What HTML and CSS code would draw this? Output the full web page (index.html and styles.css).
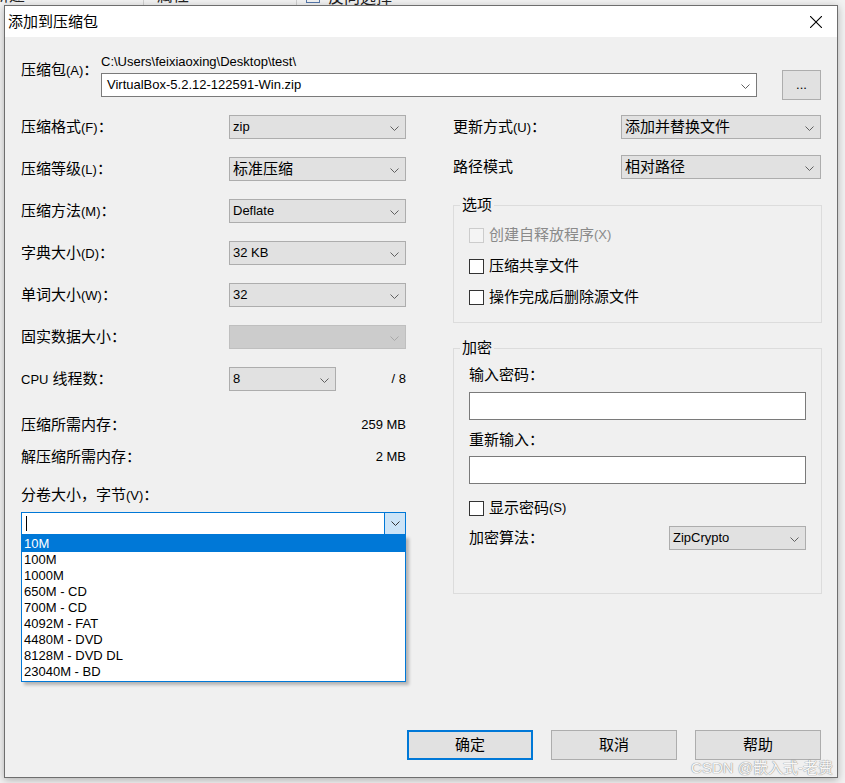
FILE: index.html
```html
<html>
<head>
<meta charset="utf-8">
<meta name="viewport" content="width=device-width, initial-scale=1">
<link rel="stylesheet" href="styles.css">
</head>
<body>
<div class="behind">
  <span class="b1">新建</span>
  <span class="sep s1"></span>
  <span class="b2">属性</span>
  <span class="sep s2"></span>
  <span class="b3"><i class="bbox"></i>反向选择</span>
</div>

<div class="dialog">
  <div class="titlebar">
    <span class="title">添加到压缩包</span>
    <svg class="close" width="12" height="12" viewBox="0 0 12 12"><path d="M0 0L12 12M12 0L0 12" stroke="#000" stroke-width="1.1"/></svg>
  </div>

  <div class="content">
    <div class="archive">
      <span class="archive-label">压缩包<span class="en">(A)</span>：</span>
      <div class="archive-field">
        <div class="path en">C:\Users\feixiaoxing\Desktop\test\</div>
        <div class="combo edit">
          <span class="en">VirtualBox-5.2.12-122591-Win.zip</span>
          <svg class="chev" width="9" height="5" viewBox="0 0 9 5"><path d="M.5 .5l4 4 4-4" fill="none" stroke="#606060"/></svg>
        </div>
      </div>
      <button class="btn browse"><span class="en">...</span></button>
    </div>

    <div class="columns">
      <div class="col-left">
        <div class="row">
          <span class="lbl">压缩格式<span class="en">(F)</span>：</span>
          <div class="combo"><span class="en">zip</span><svg class="chev" width="9" height="5" viewBox="0 0 9 5"><path d="M.5 .5l4 4 4-4" fill="none" stroke="#606060"/></svg></div>
        </div>
        <div class="row">
          <span class="lbl">压缩等级<span class="en">(L)</span>：</span>
          <div class="combo"><span>标准压缩</span><svg class="chev" width="9" height="5" viewBox="0 0 9 5"><path d="M.5 .5l4 4 4-4" fill="none" stroke="#606060"/></svg></div>
        </div>
        <div class="row">
          <span class="lbl">压缩方法<span class="en">(M)</span>：</span>
          <div class="combo"><span class="en">Deflate</span><svg class="chev" width="9" height="5" viewBox="0 0 9 5"><path d="M.5 .5l4 4 4-4" fill="none" stroke="#606060"/></svg></div>
        </div>
        <div class="row">
          <span class="lbl">字典大小<span class="en">(D)</span>：</span>
          <div class="combo"><span class="en">32 KB</span><svg class="chev" width="9" height="5" viewBox="0 0 9 5"><path d="M.5 .5l4 4 4-4" fill="none" stroke="#606060"/></svg></div>
        </div>
        <div class="row">
          <span class="lbl">单词大小<span class="en">(W)</span>：</span>
          <div class="combo"><span class="en">32</span><svg class="chev" width="9" height="5" viewBox="0 0 9 5"><path d="M.5 .5l4 4 4-4" fill="none" stroke="#606060"/></svg></div>
        </div>
        <div class="row">
          <span class="lbl">固实数据大小：</span>
          <div class="combo disabled"><span></span><svg class="chev" width="9" height="5" viewBox="0 0 9 5"><path d="M.5 .5l4 4 4-4" fill="none" stroke="#a8a8a8"/></svg></div>
        </div>
        <div class="row">
          <span class="lbl"><span class="en">CPU</span> 线程数：</span>
          <div class="combo small"><span class="en">8</span><svg class="chev" width="9" height="5" viewBox="0 0 9 5"><path d="M.5 .5l4 4 4-4" fill="none" stroke="#606060"/></svg></div>
          <span class="threads en">/ 8</span>
        </div>

        <div class="mem mem1"><span>压缩所需内存：</span><span class="en">259 MB</span></div>
        <div class="mem mem2"><span>解压缩所需内存：</span><span class="en">2 MB</span></div>

        <div class="vol-label">分卷大小，字节<span class="en">(V)</span>：</div>
        <div class="vol">
          <div class="combo focus">
            <span class="caret"></span>
            <span class="drop"><svg width="9" height="5" viewBox="0 0 9 5"><path d="M.5 .5l4 4 4-4" fill="none" stroke="#333"/></svg></span>
          </div>
          <div class="list">
            <div class="sel">10M</div>
            <div>100M</div>
            <div>1000M</div>
            <div>650M - CD</div>
            <div>700M - CD</div>
            <div>4092M - FAT</div>
            <div>4480M - DVD</div>
            <div>8128M - DVD DL</div>
            <div>23040M - BD</div>
          </div>
        </div>
      </div>

      <div class="col-right">
        <div class="row">
          <span class="lbl-r">更新方式<span class="en">(U)</span>：</span>
          <div class="combo wide"><span>添加并替换文件</span><svg class="chev" width="9" height="5" viewBox="0 0 9 5"><path d="M.5 .5l4 4 4-4" fill="none" stroke="#606060"/></svg></div>
        </div>
        <div class="row row-path">
          <span class="lbl-r">路径模式</span>
          <div class="combo wide"><span>相对路径</span><svg class="chev" width="9" height="5" viewBox="0 0 9 5"><path d="M.5 .5l4 4 4-4" fill="none" stroke="#606060"/></svg></div>
        </div>

        <fieldset class="group options">
          <legend>选项</legend>
          <div class="group-body">
            <div class="check disabled"><i class="box"></i>创建自释放程序<span class="en">(X)</span></div>
            <div class="check"><i class="box"></i>压缩共享文件</div>
            <div class="check"><i class="box"></i>操作完成后删除源文件</div>
          </div>
        </fieldset>

        <fieldset class="group crypt">
          <legend>加密</legend>
          <div class="group-body">
            <div class="plain">输入密码：</div>
            <div class="field"></div>
            <div class="plain second">重新输入：</div>
            <div class="field field2"></div>
            <div class="check show"><i class="box"></i>显示密码<span class="en">(S)</span></div>
            <div class="algo">
              <span>加密算法：</span>
              <div class="combo algo-combo"><span class="en">ZipCrypto</span><svg class="chev" width="9" height="5" viewBox="0 0 9 5"><path d="M.5 .5l4 4 4-4" fill="none" stroke="#606060"/></svg></div>
            </div>
          </div>
        </fieldset>
      </div>
    </div>

    <div class="buttons">
      <button class="btn default">确定</button>
      <button class="btn">取消</button>
      <button class="btn">帮助</button>
    </div>
  </div>

  <div class="watermark">CSDN @嵌入式-老费</div>
</div>
</body>
</html>
```

FILE: styles.css
```css
body {
  margin: 0;
  background: #f2f2f2;
  font-family: "Liberation Sans", "Noto Sans CJK SC", sans-serif;
  font-size: 15px;
  line-height: 16px;
  color: #000;
}

.en {
  font-size: 13px;
}

/* window behind the dialog */
.behind {
  height: 5px;
  overflow: hidden;
  display: flex;
  align-items: flex-start;
  color: #222;
  font-size: 16px;
  line-height: 18px;
}

.behind span {
  margin-top: -13px;
  white-space: nowrap;
}

.behind .b1 {
  margin-left: -7px;
}

.behind .sep {
  width: 1px;
  height: 20px;
  margin-top: 0;
  background: #d0d0d0;
}

.behind .s1 {
  margin-left: 118px;
}

.behind .b2 {
  margin-left: 13px;
}

.behind .s2 {
  margin-left: 107px;
}

.behind .b3 {
  margin-left: 9px;
}

.behind .bbox {
  display: inline-block;
  width: 12px;
  height: 14px;
  border: 1px solid #5577aa;
  margin-right: 8px;
}

/* dialog */
.dialog {
  position: relative;
  box-sizing: border-box;
  width: 834px;
  height: 773px;
  margin-left: 4px;
  border: 1px solid #6e6e6e;
  background: #f0f0f0;
  box-shadow: 0 2px 8px rgba(0, 0, 0, 0.28);
}

.titlebar {
  height: 31px;
  background: #fff;
  display: flex;
  align-items: center;
  justify-content: space-between;
}

.title {
  padding-left: 3px;
}

.close {
  margin-right: 15px;
}

.content {
  box-sizing: border-box;
  height: 740px;
  padding: 17px 15px 17px 16px;
  display: flex;
  flex-direction: column;
}

/* archive name */
.archive {
  display: flex;
  align-items: flex-start;
}

.archive-label {
  flex: none;
  width: 80px;
  margin-top: 8px;
  white-space: nowrap;
}

.archive-field {
  flex: none;
  width: 656px;
}

.path {
  margin-bottom: 3px;
}

/* combos */
.combo {
  box-sizing: border-box;
  width: 177px;
  height: 24px;
  padding: 0 6px 0 3px;
  display: flex;
  align-items: center;
  justify-content: space-between;
  background: #e1e1e1;
  border: 1px solid #adadad;
  white-space: nowrap;
}

.chev {
  margin-top: 3px;
  flex: none;
}

.combo.edit {
  width: 656px;
  padding-left: 5px;
  padding-right: 6px;
  background: #fff;
  border-color: #7a7a7a;
}

.combo.disabled {
  background: #cccccc;
  border-color: #bfbfbf;
}

.combo.small {
  width: 107px;
}

.combo.wide {
  width: 200px;
}

.combo.focus {
  width: 385px;
  height: 23px;
  padding: 0 0 0 4px;
  background: #fff;
  border-color: #0078d7;
}

.caret {
  width: 1px;
  height: 15px;
  background: #000;
}

.drop {
  align-self: stretch;
  width: 20px;
  display: flex;
  align-items: center;
  justify-content: center;
  background: #cce4f7;
  border-left: 1px solid #0078d7;
}

/* columns */
.columns {
  margin-top: 15px;
  display: grid;
  grid-template-columns: 385px 369px;
  column-gap: 47px;
  align-items: start;
}

.row {
  display: flex;
  align-items: center;
  height: 24px;
}

.col-left .row + .row {
  margin-top: 18px;
}

.lbl {
  width: 208px;
  flex: none;
}

.threads {
  margin-left: auto;
}

.mem {
  display: flex;
  justify-content: space-between;
}

.mem1 {
  margin-top: 26px;
}

.mem2 {
  margin-top: 16px;
}

.vol-label {
  margin-top: 22px;
}

.vol {
  position: relative;
  margin-top: 8px;
}

.list {
  position: absolute;
  left: 0;
  top: 23px;
  box-sizing: border-box;
  width: 385px;
  padding-bottom: 1px;
  background: #fff;
  border: 1px solid #0078d7;
  box-shadow: 3px 3px 3px rgba(0, 0, 0, 0.25);
  z-index: 2;
}

.list div {
  height: 16px;
  line-height: 16px;
  padding-left: 2px;
  font-size: 13px;
}

.list .sel {
  background: #0078d7;
  color: #fff;
}

.lbl-r {
  width: 168px;
  flex: none;
}

.row-path {
  margin-top: 16px;
}

/* group boxes */
.group {
  margin: 18px 0 0;
  padding: 0;
  min-width: 0;
  border: 1px solid #dcdcdc;
}

.group legend {
  margin-left: 6px;
  padding: 0 2px;
}

.group-body {
  padding: 14px 15px 17px;
}

.options .check + .check {
  margin-top: 15px;
}

.crypt {
  margin-top: 17px;
}

.crypt .group-body {
  padding-top: 11px;
  padding-bottom: 43px;
}

.check {
  display: flex;
  align-items: center;
  height: 16px;
}

.box {
  box-sizing: border-box;
  width: 15px;
  height: 15px;
  margin-right: 5px;
  background: #fff;
  border: 1px solid #333;
}

.check.disabled {
  color: #8a8a8a;
}

.check.disabled .box {
  background: #f4f4f4;
  border-color: #cccccc;
}

.field {
  box-sizing: border-box;
  height: 28px;
  margin-top: 9px;
  background: #fff;
  border: 1px solid #7a7a7a;
}

.plain.second {
  margin-top: 12px;
}

.field2 {
  margin-top: 8px;
}

.check.show {
  margin-top: 16px;
}

.algo {
  margin-top: 10px;
  display: flex;
  align-items: center;
  justify-content: space-between;
}

.algo-combo {
  width: 137px;
}

/* buttons */
.btn {
  box-sizing: border-box;
  width: 126px;
  height: 30px;
  padding: 0;
  font: inherit;
  color: #000;
  background: #e1e1e1;
  border: 1px solid #adadad;
}

.btn.default {
  border: 2px solid #0078d7;
}

.btn.browse {
  flex: none;
  width: 39px;
  margin-left: 25px;
  margin-top: 16px;
}

.buttons {
  margin-top: auto;
  margin-right: 1px;
  display: flex;
  justify-content: flex-end;
  gap: 18px;
}

.watermark {
  position: absolute;
  right: 4px;
  bottom: 1px;
  color: rgba(255, 255, 255, 0.95);
  text-shadow: 0 0 1px #8c8c8c, 0 0 1px #8c8c8c;
  font-size: 15px;
}
```
